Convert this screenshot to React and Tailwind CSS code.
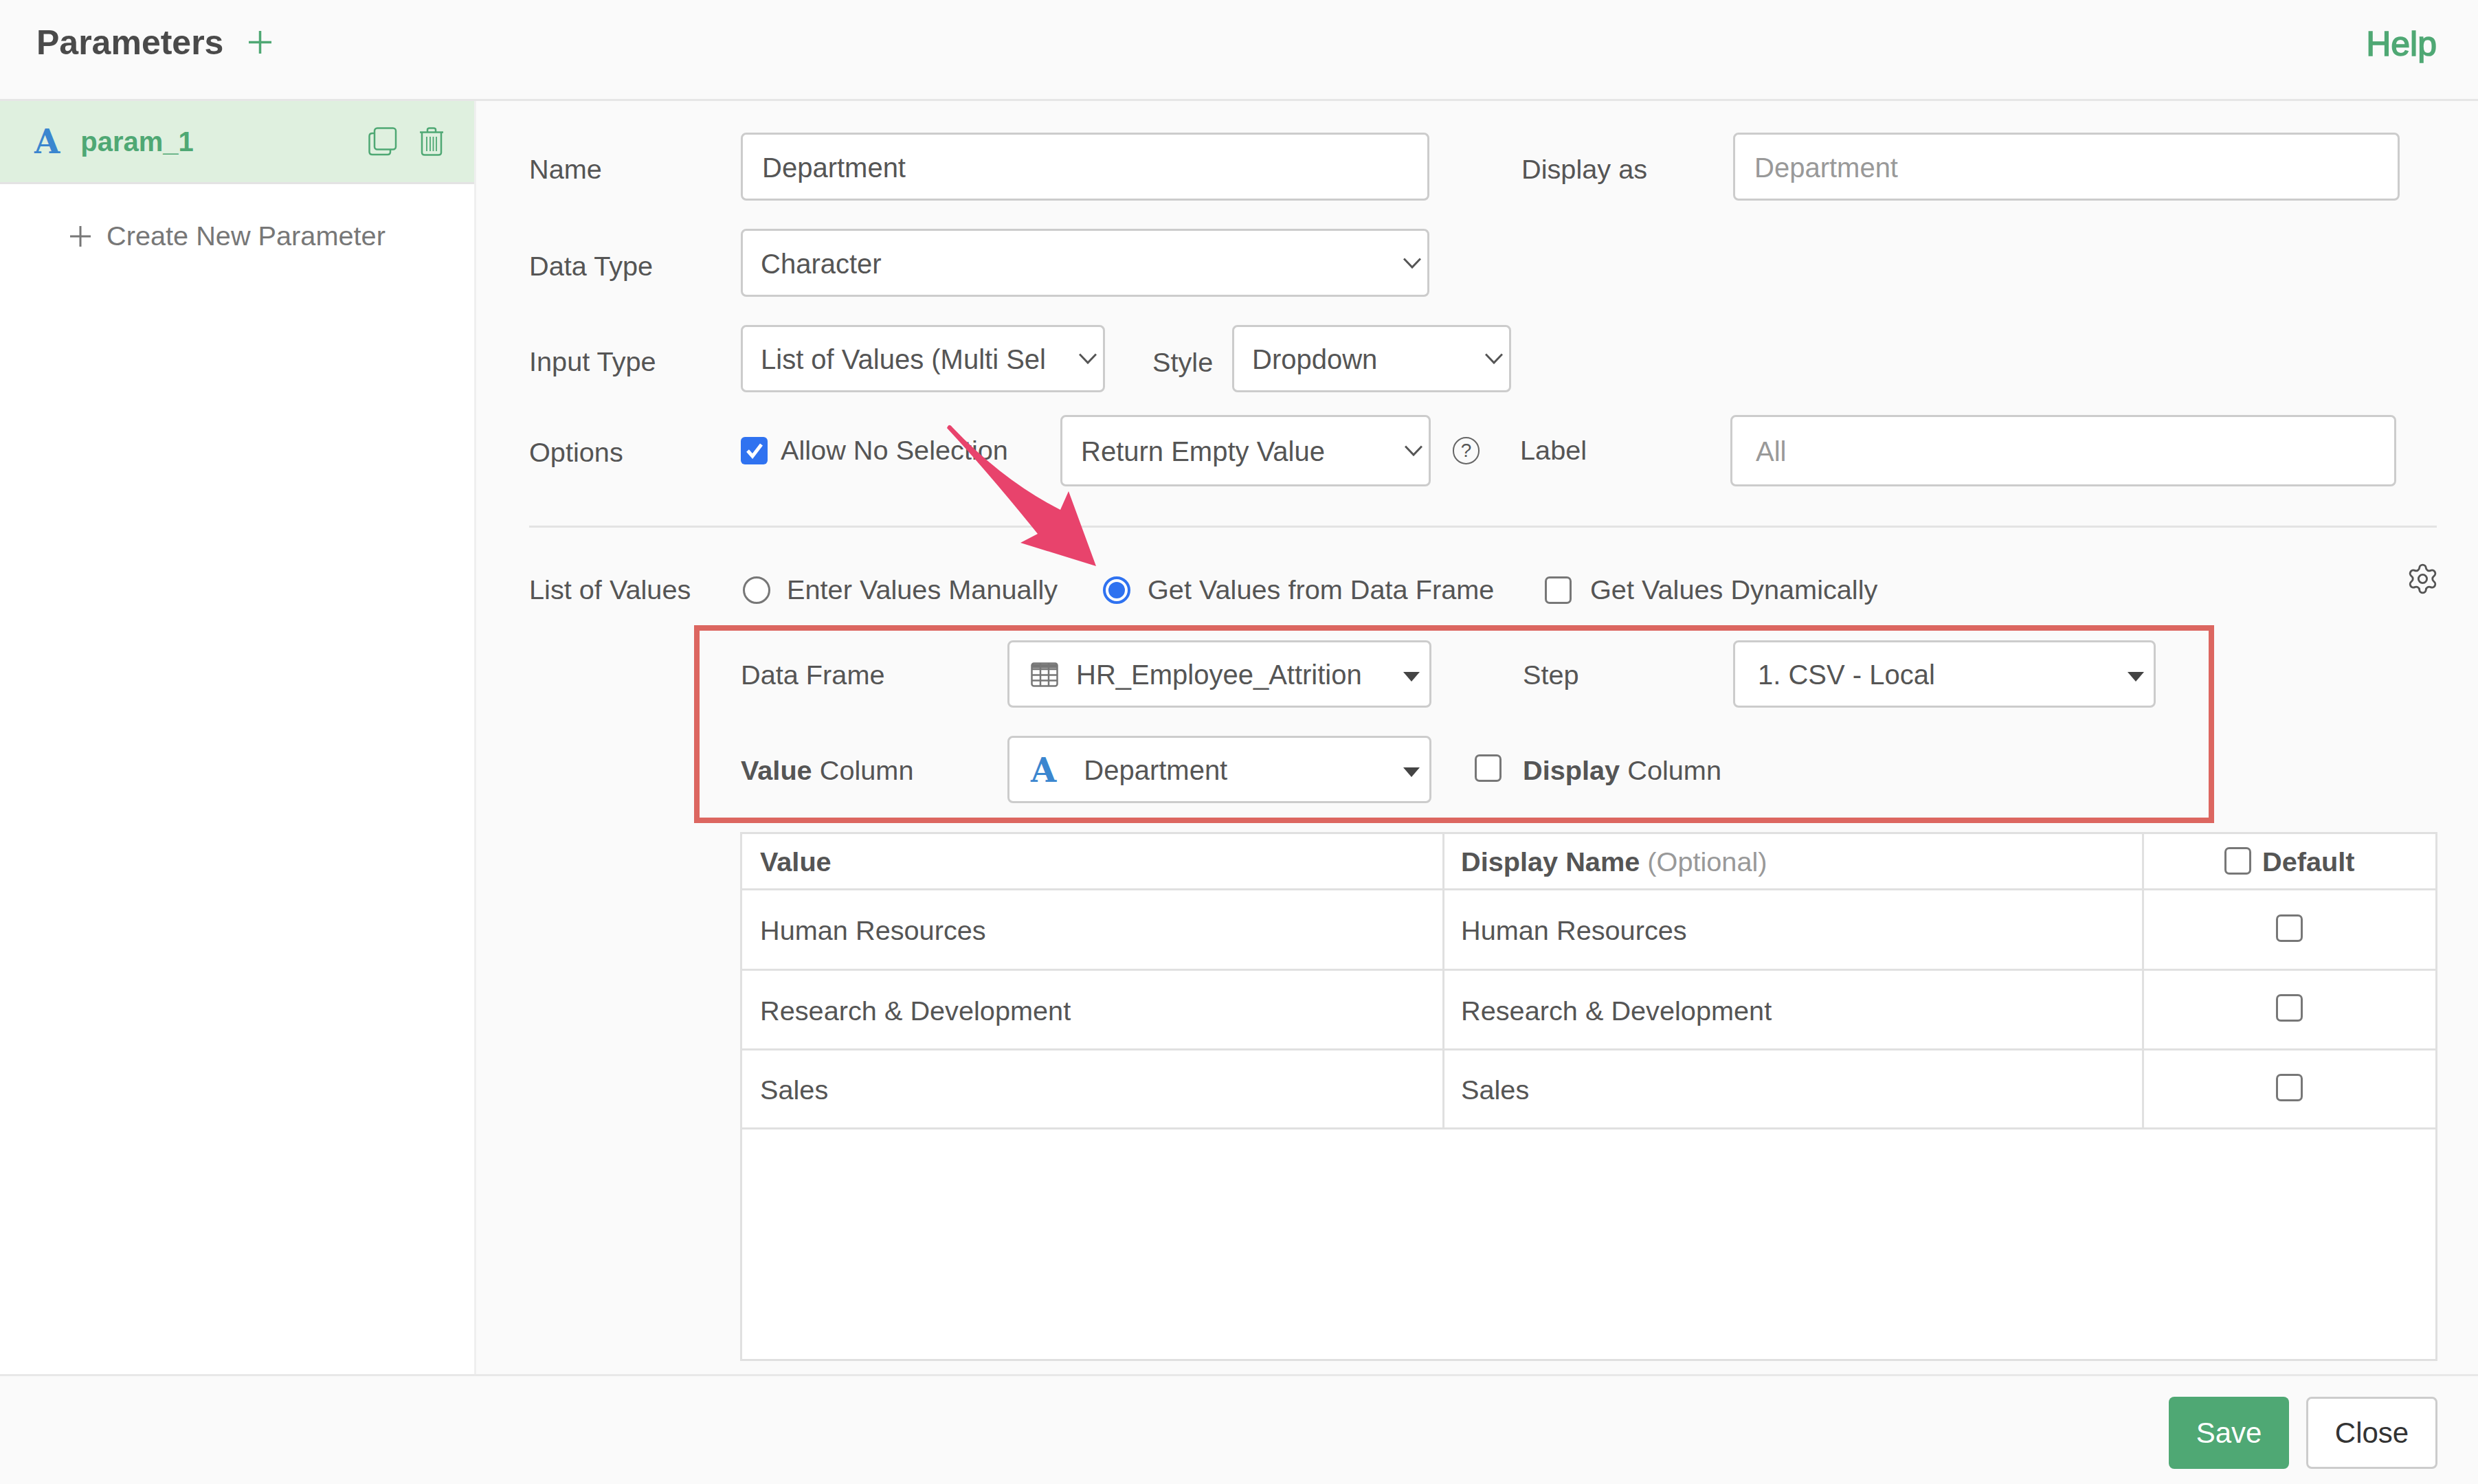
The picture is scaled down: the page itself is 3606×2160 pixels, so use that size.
import React from 'react';
import { Settings } from 'lucide-react';

const Label = ({ className = '', children }) => (
  <div className={`shrink-0 text-[39.7px] text-[#555] ${className}`}>{children}</div>
);

const Field = ({ className = '', muted, children }) => (
  <div className={`flex items-center shrink-0 bg-white border-[3px] border-[#ccc] rounded-[8px] pt-[2px] text-[40px] ${muted ? 'text-[#999]' : 'text-[#555]'} ${className}`}>
    {children}
  </div>
);

const Chevron = () => (
  <svg className="absolute right-[9px] top-1/2 -translate-y-1/2" width="26" height="16" viewBox="0 0 26 16" fill="none" stroke="#555" strokeWidth="3">
    <path d="M1 1.5 L13 14 L25 1.5" />
  </svg>
);

const Caret = () => (
  <svg className="absolute right-[14px] top-1/2 -translate-y-[3px]" width="24" height="14" viewBox="0 0 24 14" fill="#444">
    <path d="M0 0 H24 L12 14 Z" />
  </svg>
);

const Select = ({ className = '', caret, children }) => (
  <Field className={`relative pl-[26px] whitespace-nowrap overflow-hidden ${className}`}>
    {children}
    {caret ? <Caret /> : <Chevron />}
  </Field>
);

const CheckBox = ({ className = '' }) => (
  <span className={`block shrink-0 w-[39px] h-[40px] bg-white border-[3px] border-[#777] rounded-[7px] ${className}`} />
);

const TypeA = ({ className = '' }) => (
  <span className={`font-['DejaVu_Serif'] font-bold text-[48px] leading-none text-[#3b86cf] ${className}`}>A</span>
);

const rows = ['Human Resources', 'Research & Development', 'Sales'];
const rowHeights = ['h-[117px]', 'h-[116px]', 'h-[115px]'];

export default function App() {
  return (
    <div className="relative w-[3606px] h-[2160px] overflow-hidden flex flex-col bg-[#fafafa] font-['Liberation_Sans',Arial,sans-serif]">
      <header className="h-[147px] shrink-0 flex items-start border-b-[3px] border-[#e6e6e6] px-[53px]">
        <h1 className="mt-[33px] text-[50px] leading-[58px] font-bold text-[#4a4a4a]">Parameters</h1>
        <svg className="ml-[37px] mt-[45px]" width="33" height="33" viewBox="0 0 33 33" stroke="#4fa874" strokeWidth="3.5">
          <path d="M16.5 0 V33 M0 16.5 H33" />
        </svg>
        <a className="ml-auto mt-[36px] mr-[7px] text-[50px] leading-[56px] text-[#4fa874] [-webkit-text-stroke:1.5px_#4fa874]">Help</a>
      </header>

      <div className="flex flex-1 min-h-0">
        <aside className="w-[693px] shrink-0 bg-white border-r-[3px] border-[#efefef]">
          <div className="h-[121px] flex items-center bg-[#dff0df] border-b-[3px] border-[#e3e3e3] pl-[50px] pr-[44px]">
            <TypeA />
            <span className="ml-[30px] text-[40px] font-bold text-[#4fa874]">param_1</span>
            <svg className="ml-auto" width="42" height="42" viewBox="0 0 42 42" fill="none" stroke="#4fa874" strokeWidth="2.5">
              <rect x="9" y="1.5" width="31" height="31" rx="4" />
              <path d="M9 9 H6 Q1.5 9 1.5 13 V36 Q1.5 40 6 40 H28 Q32 40 32 36 V32.5" />
            </svg>
            <svg className="ml-[32px]" width="36" height="42" viewBox="0 0 36 42" fill="none" stroke="#4fa874" strokeWidth="2.5">
              <path d="M1 7.5 H35 M12 7 V4 Q12 1.5 15 1.5 H21 Q24 1.5 24 4 V7" />
              <path d="M4 8 V37 Q4 40.5 8 40.5 H28 Q32 40.5 32 37 V8" />
              <path d="M11 14 V35 M16 14 V35 M20.5 14 V35 M25 14 V35" strokeWidth="1.8" />
            </svg>
          </div>
          <div className="flex items-center mt-[46px] pl-[102px] text-[39.7px] text-[#777]">
            <svg width="30" height="30" viewBox="0 0 30 30" stroke="#777" strokeWidth="3">
              <path d="M15 0 V30 M0 15 H30" />
            </svg>
            <span className="ml-[23px]">Create New Parameter</span>
          </div>
        </aside>

        <main className="flex-1 min-w-0 pl-[77px] pt-[46px]">
          <div className="flex items-start">
            <Label className="w-[308px] pt-[24px]">Name</Label>
            <Field className="w-[1002px] h-[99px] pl-[28px]">Department</Field>
            <Label className="w-[308px] ml-[134px] pt-[24px]">Display as</Label>
            <Field muted className="w-[970px] h-[99px] pl-[28px]">Department</Field>
          </div>

          <div className="flex items-start mt-[41px]">
            <Label className="w-[308px] pt-[25px]">Data Type</Label>
            <Select className="w-[1002px] h-[99px]">Character</Select>
          </div>

          <div className="flex items-start mt-[41px]">
            <Label className="w-[308px] pt-[24px]">Input Type</Label>
            <Select className="w-[530px] h-[98px]">List of Values (Multi Sel</Select>
            <Label className="w-[116px] ml-[69px] pt-[25px]">Style</Label>
            <Select className="w-[406px] h-[98px]">Dropdown</Select>
          </div>

          <div className="flex items-center mt-[33px]">
            <Label className="w-[308px] pt-[6px]">Options</Label>
            <span className="flex items-center justify-center shrink-0 w-[39px] h-[40px] bg-[#2f72f0] rounded-[6px]">
              <svg width="26" height="24" viewBox="0 0 26 24" fill="none" stroke="#fff" strokeWidth="5">
                <path d="M3 12 L10 20 L23 3" />
              </svg>
            </span>
            <Label className="w-[407px] ml-[19px]">Allow No Selection</Label>
            <Select className="w-[539px] h-[104px] pl-[27px]">Return Empty Value</Select>
            <span className="flex items-center justify-center shrink-0 ml-[32px] w-[39px] h-[40px] border-[2px] border-[#666] rounded-full text-[28px] text-[#555]">?</span>
            <Label className="w-[306px] ml-[59px]">Label</Label>
            <Field muted className="w-[969px] h-[104px] pl-[34px]">All</Field>
          </div>

          <div className="h-[3px] mt-[57px] w-[2776px] bg-[#e3e3e3]" />

          <div className="relative flex items-center mt-[71px] h-[40px]">
            <Label className="w-[311px]">List of Values</Label>
            <span className="block shrink-0 w-[40px] h-[40px] bg-white border-[3px] border-[#777] rounded-full" />
            <Label className="w-[460px] ml-[24px]">Enter Values Manually</Label>
            <span className="flex items-center justify-center shrink-0 w-[40px] h-[40px] bg-white border-[4px] border-[#2f72f0] rounded-full">
              <span className="block w-[24px] h-[24px] bg-[#2f72f0] rounded-full" />
            </span>
            <Label className="w-[578px] ml-[25px]">Get Values from Data Frame</Label>
            <CheckBox />
            <Label className="ml-[27px]">Get Values Dynamically</Label>
            <Settings className="absolute left-[2731px] top-[-21px]" size={49} color="#555" strokeWidth={1.4} />
          </div>

          <div className="ml-[240px] mt-[31px] w-[2212px] h-[288px] border-[8px] border-[#dc6660] pl-[60px] pt-[14px]">
            <div className="flex items-center">
              <Label className="w-[388px] pt-[3px]">Data Frame</Label>
              <Select caret className="w-[617px] h-[98px] pl-[31px]">
                <svg className="mr-[26px] shrink-0" width="40" height="36" viewBox="0 0 40 36" fill="none" stroke="#777" strokeWidth="2.5">
                  <rect x="1.5" y="1.5" width="37" height="33" rx="3" />
                  <path d="M1.5 10 H38.5 M1.5 18.5 H38.5 M1.5 26.5 H38.5 M14 1.5 V34.5 M26 1.5 V34.5" />
                  <path d="M1.5 5.5 H38.5" strokeWidth="6" />
                </svg>
                HR_Employee_Attrition
              </Select>
              <Label className="w-[306px] ml-[133px] pt-[3px]">Step</Label>
              <Select caret className="w-[615px] h-[98px] pl-[33px]">1. CSV - Local</Select>
            </div>
            <div className="flex items-center mt-[41px]">
              <Label className="w-[388px] pt-[3px]"><b>Value</b> Column</Label>
              <Select caret className="w-[617px] h-[98px] pl-[31px]">
                <TypeA className="mr-[40px]" />
                Department
              </Select>
              <CheckBox className="ml-[63px] mb-[5px]" />
              <Label className="ml-[31px] pt-[3px]"><b>Display</b> Column</Label>
            </div>
          </div>

          <div className="ml-[307px] mt-[13px] w-[2470px] h-[770px] bg-white border-[3px] border-[#e0e0e0]">
            <div className="grid grid-cols-[1022px_1018px_1fr] h-[82px] border-b-[3px] border-[#e0e0e0] pt-0 text-[39.7px] text-[#555]">
              <div className="flex items-center pl-[26px] pt-[2px] border-r-[3px] border-[#e0e0e0] font-bold">Value</div>
              <div className="flex items-center pl-[24px] pt-[2px] border-r-[3px] border-[#e0e0e0]">
                <b>Display Name</b><span className="ml-[11px] text-[#999]">(Optional)</span>
              </div>
              <div className="flex items-center pl-[117px] pt-[2px]">
                <CheckBox className="mb-[4px]" />
                <b className="ml-[16px]">Default</b>
              </div>
            </div>
            {rows.map((row, i) => (
              <div key={row} className={`grid grid-cols-[1022px_1018px_1fr] ${rowHeights[i]} border-b-[3px] border-[#e0e0e0] text-[39.7px] text-[#555]`}>
                <div className="flex items-center pl-[26px] pt-[4px] border-r-[3px] border-[#e0e0e0]">{row}</div>
                <div className="flex items-center pl-[24px] pt-[4px] border-r-[3px] border-[#e0e0e0]">{row}</div>
                <div className="flex items-center pl-[192px] pb-[5px]">
                  <CheckBox />
                </div>
              </div>
            ))}
          </div>
        </main>
      </div>

      <footer className="h-[160px] shrink-0 flex items-start justify-end gap-[25px] border-t-[3px] border-[#e8e8e8] pt-[30px] pr-[59px]">
        <button className="w-[175px] h-[105px] rounded-[8px] bg-[#4fa874] text-[42px] text-white">Save</button>
        <button className="w-[191px] h-[105px] rounded-[8px] bg-white border-[3px] border-[#ccc] text-[42px] text-[#333]">Close</button>
      </footer>

      <svg className="absolute left-[1370px] top-[610px] pointer-events-none" width="240" height="225" viewBox="1370 610 240 225" fill="#e8436c">
        <path d="M1378 623 Q1381 615 1386 622 Q1460 700 1543 742 L1555 715 L1595 824 L1485 790 L1510 777 Q1440 690 1378 623 Z" />
      </svg>
    </div>
  );
}
